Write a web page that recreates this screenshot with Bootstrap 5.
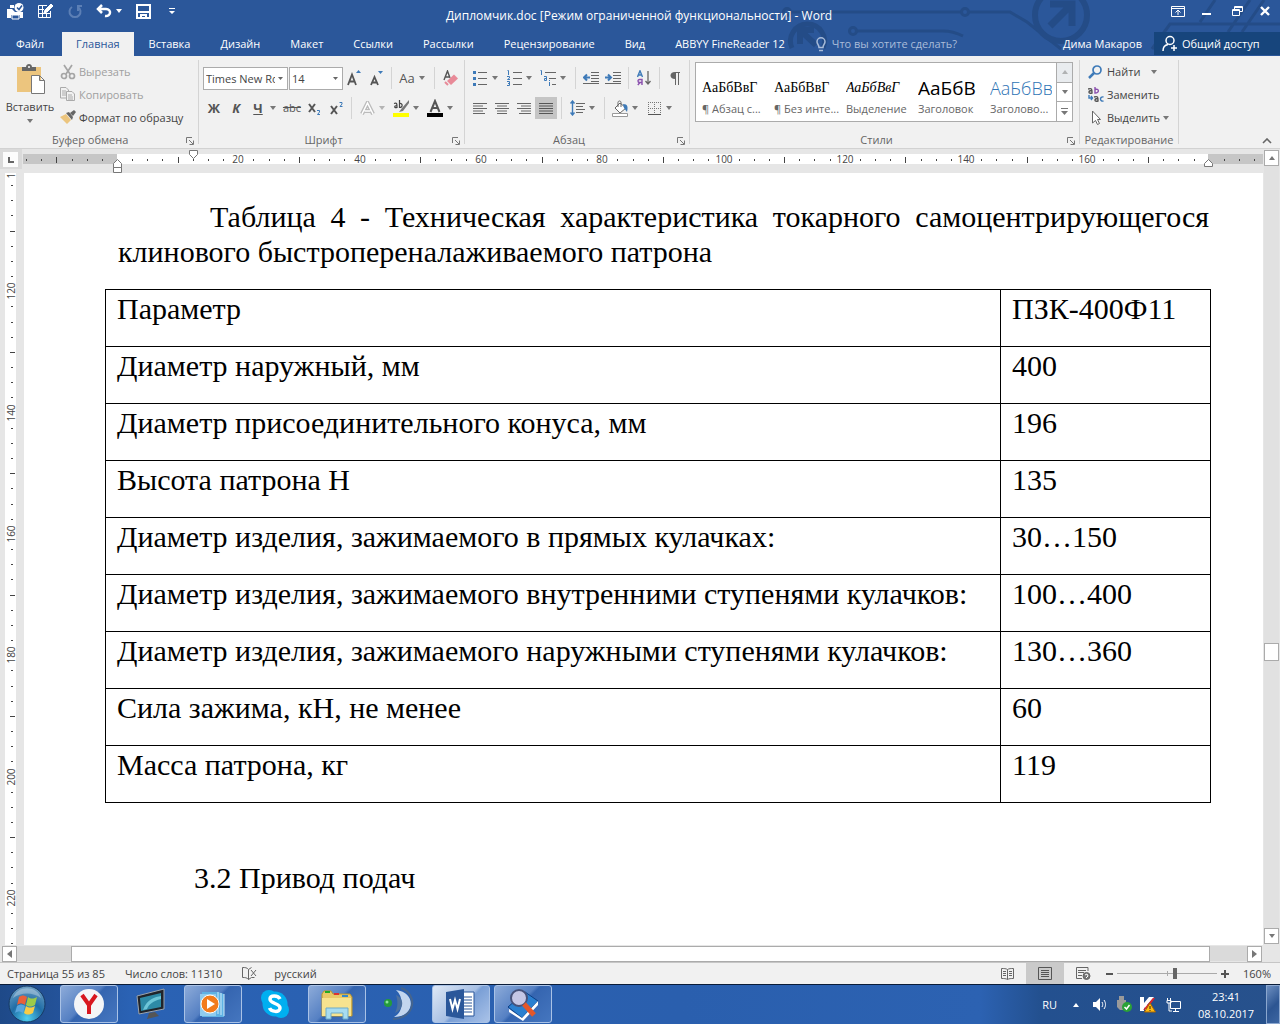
<!DOCTYPE html>
<html lang="ru">
<head>
<meta charset="utf-8">
<meta name="viewport" content="width=device-width, initial-scale=1">
<title>Дипломчик.doc - Word</title>
<link href="https://cdn.jsdelivr.net/npm/bootstrap@5.3.0/dist/css/bootstrap.min.css" rel="stylesheet">
<style>
:root{--blue:#2b579a;--ink:#444;--acc:#3e7ab8;}
body{font:11px/16px "Open Sans","Noto Sans",sans-serif;color:var(--ink);background:#e6e6e6;}
svg{display:block;flex:none}
button{font:inherit;color:inherit;border:0;background:none;padding:0}
a{color:inherit;text-decoration:none}
.tri{width:0;height:0;border:3px solid transparent;border-top:4px solid #777;border-bottom:0;flex:none}
.tri-up{border-top:0;border-bottom:4px solid #777}
/* title and tabs */
.top-band{background:var(--blue);color:#fff}
.circuit{position:absolute;right:0;top:0;width:500px;height:56px}
.title-row{height:32px}
.title-text{font-size:12px}
.qat{gap:14px;padding:2px 0 0 7px;height:20px}
.win{gap:13px;padding:2px 9px 0 0;height:20px}
.tabs-row{height:24px}
.rtab{padding:0 15px;height:24px;line-height:24px}
.rtab-first{width:60px;text-align:center;padding:0}
.rtab.current{background:#f1f1f1;color:var(--blue);padding:0 14px;margin-left:2px}
.ask{background:none;border:0;color:#fff;width:140px;padding:0;outline:0}
.ask::placeholder{color:#a9bcd9;opacity:1}
.share{background:#17457c;width:126px;height:23px}
/* ribbon */
.ribbon{background:#f1f1f1;height:93px;border-bottom:1px solid #d2d2d2}
.grp{border-right:1px solid #d4d4d4;margin:4px 0;height:84px}
.grp-foot{height:16px;line-height:16px;color:#666;position:relative;margin:0 0 -4px}
.grp-foot svg{position:absolute;right:4px;top:5px}
.g-clip{width:199px}.g-font{width:266px}.g-para{width:225px}.g-style{width:390px}.g-edit{width:99px}
.ib{width:22px;height:22px;display:flex;align-items:center;justify-content:center;flex:none;color:#555;font-size:13px;line-height:22px}
.dd{width:8px;height:22px;margin-right:4px;display:flex;align-items:center;justify-content:center;flex:none}
.vs{width:1px;height:22px;background:#d4d4d4;margin:0 4px;flex:none}
.rrow{height:22px}
.rstack{gap:8px;padding:7px 0 0 4px}
.ib.on{background:#c5c5c5}
.cb{appearance:none;border:1px solid #ababab;border-radius:0;height:23px;padding:0 12px 0 2px;font:11px "Open Sans",sans-serif;color:#444;background:#fff url("data:image/svg+xml,%3Csvg xmlns='http://www.w3.org/2000/svg' width='5' height='3'%3E%3Cpath d='M0 0h5L2.500 3z' fill='%23666'/%3E%3C/svg%3E") no-repeat right 4px center}
.cb-name{width:85px}.cb-size{width:54px;margin-left:1px}
.cmd{height:23px;gap:3px;white-space:nowrap}
.off{color:#a0a0a0}
.gallery{border:1px solid #ababab;background:#fff;height:60px;margin:2px 6px 0 5px}
.sty{width:72px;height:58px;padding:8px 4px 0 6px;overflow:hidden;color:#666;text-align:left}
.smp{height:26px;line-height:26px;color:#000;overflow:hidden;white-space:nowrap}
.smp-serif{font-family:"Liberation Serif",serif;font-size:14px}
.smp-head{font-size:19px;font-weight:500}.smp-light{font-size:18px;font-weight:300;color:#2e74b5}
.gal-side{width:16px;border-left:1px solid #ababab}
.gal-side button{flex:1;display:flex;align-items:center;justify-content:center;width:100%}
.gal-side button+button{border-top:1px solid #ababab}
/* workspace */
.hruler{height:24px}
.tabsel{width:22px;height:20px;background:#dadada;padding:3px 3px 2px 3px}
.tabsel div{width:15px;height:15px;background:#fcfcfc}
.vruler{width:24px}
.ruler-svg text{font:10px "Open Sans",sans-serif;fill:#444}
.paper{background:#fff;padding:26px 52px 0 81px;font:30px/35px "Liberation Serif",serif;color:#000}
.cap-par{text-indent:92px;text-align:justify;margin:0 2px 20px 13px}
.spec{width:100%;border-collapse:collapse;table-layout:fixed}
.spec td,.spec th{border:1px solid #000;height:57px;padding:1px 0 0 11px;vertical-align:top;font-weight:400}
.spec col:last-child{width:210px}
.sub-par{margin:57px 0 0 89px}
.vscroll{width:17px;padding:1px 1px 1px 1px}
.sbtn{width:15px;height:16px;background:#fff;border:1px solid #ababab;display:flex;align-items:center;justify-content:center;flex:none}
.vtrack{background:#e1e1e1}
.vthumb{width:15px;height:18px;background:#fff;border:1px solid #ababab}
.hscroll{height:18px;padding:1px 18px 1px 2px;border-bottom:1px solid #c6c6c6}
.htrack{background:#dadada;padding:0 37px 0 54px}
.hthumb{height:16px;background:#fff;border:1px solid #ababab}
.status{height:21px;background:#f1f1f1;padding:0 9px 0 7px}
.vw{width:38px;height:21px;display:flex;align-items:center;justify-content:center}
.vw.on{background:#cacaca}
.zoomer{appearance:none;width:100px;height:15px;background:linear-gradient(#aaa,#aaa) center/100% 1px no-repeat,linear-gradient(#aaa,#aaa) 50px center/1px 5px no-repeat;margin:0 4px}
.zoomer::-webkit-slider-thumb{appearance:none;width:4px;height:11px;background:#666}
/* taskbar */
.task{height:40px;border-top:1px solid #0a1c38;background:linear-gradient(90deg,#1e4988 0,#24539a 60px,#2a62b4 130px,#2a5fae 680px,#2c62b2 980px,#23508f 1040px,#27518c 1280px);color:#fff}
.tb{width:58px;height:38px;display:flex;align-items:center;justify-content:center;flex:none}
.tb.open{border:1px solid #a9c2e6;border-radius:3px;background:linear-gradient(135deg,#8dabd9,#5580c3 45%,#3565b0 50%,#4576bf)}
.tb.act{background:linear-gradient(135deg,#dfe8f5,#a8c0e4 50%,#7a9fd6 55%,#a9c2e8)}
.deskbtn{width:14px;height:39px;border:1px solid #8ba7cf;background:linear-gradient(135deg,#6d8fc0,#2c5592 55%,#3d66a2)}
.clock{width:76px;line-height:17px;text-align:center}
</style>
<script src="https://cdn.jsdelivr.net/npm/bootstrap@5.3.0/dist/js/bootstrap.bundle.min.js"></script>
</head>
<body class="d-flex flex-column min-vh-100">
<svg width="0" height="0" class="position-absolute"><defs>
<symbol id="launch" viewBox="0 0 8 8"><path d="M.5 6V.5H6M3 3l4 4M7.500 3.500v4h-4" fill="none" stroke="#777"/></symbol>
</defs></svg>
<header class="top-band position-relative">
  <svg class="circuit" viewBox="0 0 500 56" fill="none" stroke="#244c87" stroke-width="3">
    <path d="M12 12h169M189 12h41l17 10 34 27M77 31h86c8 0 12 1 20 5"/>
    <circle cx="7" cy="12" r="3.500"/><circle cx="185" cy="12" r="3.500"/><circle cx="73" cy="31" r="3.500"/>
    <path d="M12 48a17 17 0 1 1 31 0" stroke-width="5"/><path d="M36 45L22 32M20 44V30h14" stroke-width="6"/>
    <circle cx="281" cy="15" r="26" stroke-width="6"/><path d="M270 26l20-20M270 4h22v22" stroke-width="7"/>
    <path d="M372 49l18-25h110M420 22l15-22M448 32L470 0M462 32L484 0"/>
  </svg>
  <div class="title-row d-flex position-relative">
    <div class="qat d-flex align-items-center" style="flex:1 1 0">
      <svg width="17" height="17" viewBox="0 0 17 17" fill="#fff"><path d="M0 6h5l3 3h8v6h-3v-3H4v3H0zM3 2h4v3H3z"/><path d="M5 12h7v4H5z" fill="none" stroke="#fff"/><circle cx="12" cy="4.500" r="4.500"/><path d="M10 4.500l2 2 3-4" stroke="#2b579a" fill="none" stroke-width="1.500"/></svg>
      <svg width="16" height="16" viewBox="0 0 16 16" fill="none" stroke="#fff"><path d="M9 2.500H.5v12h12V8M.5 6.500H6M.5 10.500h12M4.500 2.500v12M8.500 10v4.500"/><path d="M6 10l1-3 6-6 2 2-6 6z" fill="#fff"/></svg>
      <svg width="14" height="15" viewBox="0 0 14 15" fill="none" stroke="#5c7fb5" stroke-width="2"><path d="M4 3a5.500 5.500 0 1 0 6 0M10 7V2h4"/></svg>
      <svg width="16" height="14" viewBox="0 0 16 14" fill="none" stroke="#fff" stroke-width="2.500"><path d="M6 1L2 5l4 4M2 5h8c6 0 5 8-1 7"/></svg>
      <span class="tri border-bottom-0" style="border-top-color:#fff;margin-left:-10px"></span>
      <svg width="15" height="15" viewBox="0 0 15 15"><path d="M1 1h13v13H1zM1 8h13M5 14v-3h5v3" fill="none" stroke="#fff" stroke-width="2"/></svg>
      <svg class="ms-1" width="6" height="7" viewBox="0 0 6 7" fill="#fff"><path d="M0 0h6v1H0zM0 3h6L3 6z"/></svg>
    </div>
    <div class="title-text align-self-center">Дипломчик.doc [Режим ограниченной функциональности] - Word</div>
    <div class="win d-flex align-items-center justify-content-end" style="flex:1 1 0">
      <button aria-label="Параметры ленты"><svg width="14" height="11" viewBox="0 0 14 11" fill="none" stroke="#fff"><path d="M.5.5h13v10H.5zM.5 2.500h13M7 9V4.500M4.500 6.500L7 4l2.500 2.500"/></svg></button>
      <button aria-label="Свернуть" class="px-1"><svg width="9" height="8"><path d="M0 6h9v2H0z" fill="#fff"/></svg></button>
      <button aria-label="Восстановить" class="px-1"><svg width="11" height="10" viewBox="0 0 11 10" fill="none" stroke="#fff"><path d="M2.500 3V.5h8v5H8M.5 3.500h7v6h-7zM.5 4.500h7M2.500 1.500h8"/></svg></button>
      <button aria-label="Закрыть"><svg width="11" height="10"><path d="M1 1l8 8M9 1L1 9" stroke="#fff" stroke-width="2.400"/></svg></button>
    </div>
  </div>
  <nav class="tabs-row d-flex position-relative">
    <a href="#" class="rtab rtab-first">Файл</a><a href="#" class="rtab current">Главная</a><a href="#" class="rtab">Вставка</a><a href="#" class="rtab">Дизайн</a><a href="#" class="rtab">Макет</a><a href="#" class="rtab">Ссылки</a><a href="#" class="rtab">Рассылки</a><a href="#" class="rtab">Рецензирование</a><a href="#" class="rtab">Вид</a><a href="#" class="rtab">ABBYY FineReader 12</a>
    <label class="d-flex align-items-center ms-3" style="gap:6px"><svg width="10" height="15" viewBox="0 0 10 15" fill="none" stroke="#a9bcd9" stroke-width="1.500"><path d="M3 10.500C3 8 1 7 1 4.800a4 4 0 0 1 8 0C9 7 7 8 7 10.500zM3 13.500h4"/></svg><input class="ask" placeholder="Что вы хотите сделать?" aria-label="Что вы хотите сделать?"></label>
    <a href="#" class="ms-auto me-2 pe-1 align-self-center">Дима Макаров</a>
    <button class="share d-flex align-items-center gap-1 ps-2"><svg width="16" height="17" viewBox="0 0 16 17" fill="none" stroke="#fff" stroke-width="1.500"><circle cx="8" cy="5.500" r="4"/><path d="M1 16c0-4 2-6 5-6.500M9 13h6M12 10v6"/></svg>Общий доступ</button>
  </nav>
</header>

<section class="ribbon d-flex">
  <div class="grp g-clip d-flex flex-column">
    <div class="d-flex flex-grow-1">
      <button class="d-flex flex-column align-items-center pt-1" style="width:60px">
        <svg width="29" height="31" viewBox="0 0 29 31"><path d="M1 3h24v25H1z" fill="#ecc57e"/><path d="M6 7V3h4c0-4 6-4 6 0h4v4z" fill="#666"/><circle cx="13" cy="3" r="1" fill="#fff"/><path d="M15.500 11.500h8l5 5v13h-13zM23.500 11.500v5h5" fill="#fff" stroke="#777"/></svg>
        <span class="mt-1">Вставить</span><span class="tri mt-1"></span></button>
      <div class="d-flex flex-column">
        <button class="cmd off d-flex align-items-center"><svg width="16" height="16" viewBox="0 0 16 16" fill="none" stroke="#a5a5a5" stroke-width="1.700"><path d="M4 1l6 9M12 1L6 10"/><circle cx="4" cy="12" r="2.500"/><circle cx="12" cy="12" r="2.500"/></svg>Вырезать</button>
        <button class="cmd off d-flex align-items-center"><svg width="16" height="15" viewBox="0 0 16 15" fill="#f1f1f1" stroke="#aaa"><path d="M.5.5H6L8.500 3v8h-8zM2 4h4M2 6h4M2 8h4"/><path d="M6.500 4.500H12L14.500 7v6.500h-8zM8 8h4M8 10h5M8 12h5"/></svg>Копировать</button>
        <button class="cmd d-flex align-items-center"><svg width="16" height="15" viewBox="0 0 16 15"><path d="M0 7l6-3 5 6-4 4z" fill="#ecc57e"/><path d="M6 3l3-1 4 5-1 3zM10 3l4-3 2 2-3 4z" fill="#666"/></svg>Формат по образцу</button>
      </div>
    </div>
    <div class="grp-foot ps-5"><span class="ps-1">Буфер обмена</span><svg width="8" height="8"><use href="#launch"/></svg></div>
  </div>
  <div class="grp g-font d-flex flex-column">
    <div class="rstack d-flex flex-column flex-grow-1">
      <div class="rrow d-flex align-items-center">
        <select class="cb cb-name" aria-label="Шрифт"><option>Times New Roman</option></select><select class="cb cb-size" aria-label="Размер"><option>14</option></select>
        <button class="ib" aria-label="Увеличить"><svg width="14" height="16" viewBox="0 0 14 16"><path d="M1 15L5 4.500 9 15M2.500 11.500h5" fill="none" stroke="#555" stroke-width="1.800"/><path d="M9 3l2.500-3L14 3z" fill="#3e7ab8"/></svg></button>
        <button class="ib" aria-label="Уменьшить"><svg width="13" height="16" viewBox="0 0 13 16"><path d="M1 15l3.500-8L8 15M2.300 12.500h4.500" fill="none" stroke="#555" stroke-width="1.800"/><path d="M8 1h5l-2.500 3z" fill="#3e7ab8"/></svg></button>
        <span class="vs"></span><button class="ib">Aa</button><span class="dd"><i class="tri"></i></span><span class="vs"></span>
        <button class="ib" aria-label="Очистить"><svg width="15" height="16" viewBox="0 0 15 16"><path d="M1 10l3.500-9L7 8M2 7h4" fill="none" stroke="#555" stroke-width="1.400"/><path d="M4 11l7-6.500 4 4L8 15z" fill="#e88a98"/><path d="M2 12l3 3" stroke="#e88a98" stroke-width="2"/></svg></button>
      </div>
      <div class="rrow d-flex align-items-center">
        <button class="ib fw-bold">Ж</button><button class="ib fw-bold fst-italic">К</button><button class="ib fw-bold text-decoration-underline">Ч</button><span class="dd"><i class="tri"></i></span>
        <button class="ib text-decoration-line-through" style="font-size:11px">abc</button><button class="ib" aria-label="Подстрочный"><svg width="13" height="13" viewBox="0 0 13 13" fill="none"><path d="M1 2l6 8M7 2l-6 8" stroke="#555" stroke-width="2"/><path d="M9 8.500h2.500V10L9.500 12.500H12" stroke="#3e7ab8"/></svg></button><button class="ib" aria-label="Надстрочный"><svg width="13" height="13" viewBox="0 0 13 13" fill="none"><path d="M1 4l6 8M7 4l-6 8" stroke="#555" stroke-width="2"/><path d="M9.500.5H12V2L10 4.500h2.500" stroke="#3e7ab8"/></svg></button>
        <span class="vs"></span>
        <button class="ib" aria-label="Эффекты"><svg width="15" height="15" viewBox="0 0 15 15" fill="none"><path d="M2 13L7.500 2 13 13M4.500 10h6" stroke="#bbb" stroke-width="4"/><path d="M2 13L7.500 2 13 13M4.500 10h6" stroke="#fff" stroke-width="1.500"/></svg></button><span class="dd opacity-50"><i class="tri"></i></span>
        <button class="ib" aria-label="Выделение"><svg width="17" height="18" viewBox="0 0 17 18"><path d="M0 14h16v4H0z" fill="#ff0"/><path d="M16 1L9 9l-3 4 4-1 6-8z" fill="#777"/><path d="M1 4.500c3-1 3 0 3 4C1 9.500 1 6.500 4 6.500M6.500 1v7.500c4 0 3-5 0-4" fill="none" stroke="#444" stroke-width="1.200"/></svg></button><span class="dd"><i class="tri"></i></span>
        <button class="ib" aria-label="Цвет"><svg width="17" height="18" viewBox="0 0 17 18"><path d="M0 14h16v4H0z"/><path d="M3.500 13L8 2l4.500 11M5 9h6" fill="none" stroke="#555" stroke-width="2"/></svg></button><span class="dd"><i class="tri"></i></span>
      </div>
    </div>
    <div class="grp-foot text-center pe-3">Шрифт<svg width="8" height="8"><use href="#launch"/></svg></div>
  </div>
  <div class="grp g-para d-flex flex-column">
    <div class="rstack d-flex flex-column flex-grow-1">
      <div class="rrow d-flex align-items-center">
        <button class="ib" aria-label="Маркеры"><svg width="14" height="16"><path d="M5 2.500h9M5 8.500h9M5 14.500h9" stroke="#666"/><path d="M0 1h3v3H0zM0 7h3v3H0zM0 13h3v3H0z" fill="#3e7ab8"/></svg></button><span class="dd"><i class="tri"></i></span>
        <button class="ib" aria-label="Нумерация"><svg width="15" height="16" fill="none"><path d="M6 2.500h9M6 8.500h9M6 14.500h9" stroke="#666"/><path d="M.5.5h1V5M0 6.500h2.500V8L.5 9.500H3M0 11.500h2.500v4H0M1 13.500h1" stroke="#3e7ab8"/></svg></button><span class="dd"><i class="tri"></i></span>
        <button class="ib" aria-label="Многоуровневый список"><svg width="16" height="16" fill="none"><path d="M5 2.500h11M9 8.500h7M12 14.500h4" stroke="#666"/><path d="M.5.5h1V5M4 6.500h2.500v4H4.500v-2h2M9.500 10v1M9.500 12v4" stroke="#3e7ab8"/></svg></button><span class="dd"><i class="tri"></i></span>
        <span class="vs"></span>
        <button class="ib" aria-label="Уменьшить отступ"><svg width="16" height="12" fill="none"><path d="M8 .5h8M8 3.500h8M8 6.500h8M8 9.500h8M0 11.500h16" stroke="#666"/><path d="M7 5.500H1M4 2.500l-3 3 3 3" stroke="#3e7ab8" stroke-width="2"/></svg></button><button class="ib" aria-label="Увеличить отступ"><svg width="16" height="12" fill="none"><path d="M8 .5h8M8 3.500h8M8 6.500h8M8 9.500h8M0 11.500h16" stroke="#666"/><path d="M0 5.500h6M3 2.500l3 3-3 3" stroke="#3e7ab8" stroke-width="2"/></svg></button>
        <span class="vs"></span>
        <button class="ib" aria-label="Сортировка"><svg width="14" height="16" viewBox="0 0 14 16" fill="none"><path d="M.5 7L3 .8 5.500 7M1.500 5h3" stroke="#3e7ab8" stroke-width="1.400"/><path d="M5 15V9.500H2.500c-2 0-2 3 0 3H5M3 12.500L.8 15" stroke="#8a4fae" stroke-width="1.400"/><path d="M11 1v13M8.500 11l2.500 3 2.500-3" stroke="#666" stroke-width="1.300"/></svg></button>
        <span class="vs"></span>
        <button class="ib" aria-label="Знаки"><svg width="10" height="13"><path d="M5 0h5v1H9v12H8V1H6v12H5V7C-1 7-1 0 5 0z" fill="#666"/></svg></button>
      </div>
      <div class="rrow d-flex align-items-center">
        <button class="ib" aria-label="По левому краю"><svg width="14" height="11"><path d="M0 .5h14M0 3h10M0 5.500h14M0 8h10M0 10.500h12" stroke="#666"/></svg></button><button class="ib" aria-label="По центру"><svg width="14" height="11"><path d="M0 .5h14M2 3h10M0 5.500h14M2 8h10M2 10.500h10" stroke="#666"/></svg></button><button class="ib" aria-label="По правому краю"><svg width="14" height="11"><path d="M0 .5h14M4 3h10M0 5.500h14M4 8h10M2 10.500h12" stroke="#666"/></svg></button><button class="ib on" aria-label="По ширине"><svg width="14" height="11"><path d="M0 .5h14M0 3h14M0 5.500h14M0 8h14M0 10.500h14" stroke="#555"/></svg></button>
        <span class="vs"></span>
        <button class="ib" aria-label="Интервал"><svg width="15" height="16" fill="none"><path d="M6 3.500h9M6 6.500h7M6 9.500h9M6 12.500h7" stroke="#666"/><path d="M2.500 1v14M.5 3.500l2-2.500 2 2.500M.5 12.500l2 2.500 2-2.500" stroke="#3e7ab8" stroke-width="1.400"/></svg></button><span class="dd"><i class="tri"></i></span>
        <span class="vs"></span>
        <button class="ib" aria-label="Заливка"><svg width="17" height="17"><path d="M8 3l6 5-6 5-5-5zM6 7V2.500c0-2 3-2 3 0V7" fill="#fff" stroke="#666"/><path d="M11 4c5 0 5 3 4 8l-3-4z" fill="#3e7ab8"/><path d="M.5 13.500h15v3H.5z" fill="#fff" stroke="#999"/></svg></button><span class="dd"><i class="tri"></i></span>
        <button class="ib" aria-label="Границы"><svg width="13" height="13" fill="none"><path d="M.5 0v12M6.500 0v12M12.500 0v12M0 .5h13M0 6.500h13" stroke="#777" stroke-dasharray="1 1"/><path d="M0 12.500h13" stroke="#555"/></svg></button><span class="dd"><i class="tri"></i></span>
      </div>
    </div>
    <div class="grp-foot text-center pe-3">Абзац<svg width="8" height="8"><use href="#launch"/></svg></div>
  </div>
  <div class="grp g-style d-flex flex-column">
    <div class="flex-grow-1">
      <div class="gallery d-flex">
        <button class="sty"><div class="smp smp-serif">АаБбВвГ</div><div class="text-nowrap">¶ Абзац с...</div></button>
        <button class="sty"><div class="smp smp-serif">АаБбВвГ</div><div class="text-nowrap">¶ Без инте...</div></button>
        <button class="sty"><div class="smp smp-serif fst-italic">АаБбВвГ</div><div class="text-nowrap">Выделение</div></button>
        <button class="sty"><div class="smp smp-head">АаБбВ</div><div class="text-nowrap">Заголовок</div></button>
        <button class="sty"><div class="smp smp-light">АаБбВв</div><div class="text-nowrap">Заголово...</div></button>
        <div class="gal-side d-flex flex-column ms-auto">
          <button class="bg-body-secondary" aria-label="Вверх"><i class="tri tri-up opacity-50"></i></button><button aria-label="Вниз"><i class="tri"></i></button><button aria-label="Ещё"><svg width="7" height="7"><path d="M0 0h7v1H0zM0 3h7L3.500 7z" fill="#777"/></svg></button>
        </div>
      </div>
    </div>
    <div class="grp-foot text-center pe-3">Стили<svg width="8" height="8"><use href="#launch"/></svg></div>
  </div>
  <div class="grp g-edit d-flex flex-column">
    <div class="d-flex flex-column flex-grow-1 ps-2">
      <button class="cmd d-flex align-items-center"><svg width="16" height="14" viewBox="0 0 16 14" fill="none" stroke="#3e7ab8"><circle cx="9" cy="5" r="4" stroke-width="1.700"/><path d="M6 8l-5 5" stroke-width="2.500"/></svg>Найти<i class="tri ms-2"></i></button>
      <button class="cmd d-flex align-items-center"><svg width="16" height="15" viewBox="0 0 16 15" fill="none" stroke-width="1.400"><path d="M0 2c4-1 4 0 4 4C0 7 0 3.500 4 3.500M6 10c4-1 4 0 4 4-4 1-4-2.500 0-2.500" stroke="#555"/><path d="M7 0v6c5 0 4-5 0-3.500" stroke="#8a4fae"/><path d="M15.500 10c-4-1-4 5 0 4M1 8v3h3M3 9l1.500 2L3 13" stroke="#3e7ab8"/></svg>Заменить</button>
      <button class="cmd d-flex align-items-center"><svg width="16" height="16" viewBox="0 0 16 16"><path d="M4.500 1v12l3-2.500 2 4 2-1-2-4h3z" fill="#fff" stroke="#666"/></svg>Выделить<i class="tri"></i></button>
    </div>
    <div class="grp-foot text-center text-nowrap">Редактирование</div>
  </div>
  <button class="ms-auto align-self-end pe-1 me-1 pb-1" aria-label="Свернуть ленту"><svg width="10" height="6"><path d="M1 5l4-4 4 4" fill="none" stroke="#666" stroke-width="1.600"/></svg></button>
</section>

<main class="d-flex flex-grow-1">
  <div class="d-flex flex-column flex-grow-1">
    <div class="hruler d-flex">
      <div class="tabsel"><div><svg width="15" height="15"><path d="M6 5v5h5" fill="none" stroke="#666" stroke-width="2"/></svg></div></div>
      <svg id="hr" class="ruler-svg flex-grow-1" height="24" style="width:0"></svg>
    </div>
    <div class="d-flex flex-grow-1">
      <svg id="vr" class="ruler-svg vruler align-self-stretch" height="772"></svg>
      <article class="paper flex-grow-1">
        <p class="cap-par">Таблица 4 - Техническая характеристика токарного самоцентрирующегося клинового быстропереналаживаемого патрона</p>
        <table class="spec">
          <colgroup><col><col></colgroup>
          <tr><th>Параметр</th><th>ПЗК-400Ф11</th></tr>
          <tr><td>Диаметр наружный, мм</td><td>400</td></tr>
          <tr><td>Диаметр присоединительного конуса, мм</td><td>196</td></tr>
          <tr><td>Высота патрона Н</td><td>135</td></tr>
          <tr><td>Диаметр изделия, зажимаемого в прямых кулачках:</td><td>30…150</td></tr>
          <tr><td>Диаметр изделия, зажимаемого внутренними ступенями кулачков:</td><td>100…400</td></tr>
          <tr><td>Диаметр изделия, зажимаемого наружными ступенями кулачков:</td><td>130…360</td></tr>
          <tr><td>Сила зажима, кН, не менее</td><td>60</td></tr>
          <tr><td>Масса патрона, кг</td><td>119</td></tr>
        </table>
        <p class="sub-par">3.2 Привод подач</p>
      </article>
    </div>
  </div>
  <div class="vscroll d-flex flex-column">
    <button class="sbtn" aria-label="Вверх"><i class="tri tri-up"></i></button>
    <div class="vtrack d-flex flex-column flex-grow-1"><div style="flex:478 1 0"></div><div class="vthumb"></div><div style="flex:267 1 0"></div></div>
    <button class="sbtn" aria-label="Вниз"><i class="tri"></i></button>
  </div>
</main>
<div class="hscroll d-flex">
  <button class="sbtn" aria-label="Влево"><svg width="5" height="8"><path d="M5 0v8L0 4z" fill="#777"/></svg></button>
  <div class="htrack flex-grow-1"><div class="hthumb"></div></div>
  <button class="sbtn" aria-label="Вправо"><svg width="5" height="8"><path d="M0 0v8l5-4z" fill="#777"/></svg></button>
</div>
<footer class="status d-flex align-items-center">
  <span>Страница 55 из 85</span><span style="margin:0 20px">Число слов: 11310</span>
  <svg width="15" height="13" fill="none" stroke="#666"><path d="M6.500 2.500C5 .5 3 .5.5.5v10c2.500 0 4.500 0 6 2zM6.500 2.500l3-2M6.500 12.500l3-2h3M9 3l5 6M14 3L9 9"/></svg><span style="margin-left:17px">русский</span>
  <div class="d-flex align-items-center ms-auto">
    <button class="vw" aria-label="Чтение"><svg width="13" height="12" fill="none" stroke="#666"><path d="M6.500 1.500C5 .5 3 .5.5.5v10c2.500 0 4.500 0 6 1 1.500-1 3.500-1 6-1V.5c-2.500 0-4.500 0-6 1v10M2 3.500h3M2 5.500h3M2 7.500h3M8 3.500h3M8 5.500h3M8 7.500h3"/></svg></button>
    <button class="vw on" aria-label="Разметка"><svg width="14" height="13" fill="none" stroke="#555"><path d="M.5.5h13v12H.5zM3 3.500h8M3 5.500h8M3 7.500h8M3 9.500h8"/></svg></button>
    <button class="vw" aria-label="Веб"><svg width="15" height="13" fill="none" stroke="#666"><path d="M12 4V.5H.5v11H6M2 3.500h8M2 5.500h6M2 8.500h4"/><circle cx="10.500" cy="9" r="3.500" fill="#777"/><path d="M9 8l2-1 1 2-2 2" stroke="#fff"/></svg></button>
    <button class="ms-1" aria-label="Меньше"><svg width="7" height="8"><path d="M0 3h7v2H0z" fill="#555"/></svg></button>
    <input type="range" class="zoomer" min="0" max="100" value="58" aria-label="Масштаб">
    <button aria-label="Больше"><svg width="8" height="8"><path d="M0 3h3V0h2v3h3v2H5v3H3V5H0z" fill="#555"/></svg></button>
    <span style="margin-left:14px">160%</span>
  </div>
</footer>
<nav class="task d-flex">
  <button class="tb me-1" style="width:56px" aria-label="Пуск"><svg width="40" height="38" viewBox="0 0 40 38"><defs><radialGradient id="orb" cx=".5" cy=".9" r=".9"><stop offset="0" stop-color="#4fd0f0"/><stop offset=".5" stop-color="#1f6da6"/><stop offset="1" stop-color="#6f9fc4"/></radialGradient></defs><circle cx="19" cy="19" r="18" fill="url(#orb)" stroke="#173a63"/><path d="M11 12c3-2 5-2 8 0l-2 8c-3-2-5-2-8 0z" fill="#e8603a"/><path d="M20 12c3 2 5 2 9 0l-2 8c-4 2-6 2-9 0z" fill="#9ccb4a"/><path d="M9 21c3-2 5-2 8 0l-2 7c-3-2-5-2-8 0z" fill="#58a5dd"/><path d="M18 21c3 2 5 2 9 0l-2 7c-4 2-6 2-9 0z" fill="#f8cc46"/><path d="M5 13C9 0 29 0 33 13 25 7 13 7 5 13z" fill="#fff" opacity=".3"/></svg></button>
  <div class="d-flex gap-1">
    <button class="tb open" aria-label="Яндекс"><svg width="32" height="32"><circle cx="16" cy="16" r="15" fill="#f4f5f7"/><path d="M9 7l7 10v9M23 7l-7 10" fill="none" stroke="#d8171f" stroke-width="4"/></svg></button>
    <button class="tb" aria-label="ТВ"><svg width="32" height="34" viewBox="0 0 32 34"><path d="M2 9L29 2v20L4 27z" fill="#20242a" stroke="#9aa3ad"/><path d="M5 11l21-5v14L6 24z" fill="#2d8aa6"/><path d="M8 23C12 12 20 10 26 9v3c-8 2-12 5-14 10z" fill="#6dc6d8"/><path d="M14 26l6-1 4 4-12 3z" fill="#555"/></svg></button>
    <button class="tb open" aria-label="Проигрыватель"><svg width="30" height="30"><path d="M4 3h16l6 2v23H4z" fill="#5fb2e4"/><path d="M20 3v22M23 4v22M26 5v22" stroke="#cfeaf8"/><path d="M2 5h16v22H2z" fill="#8fcbee"/><circle cx="12" cy="15" r="9" fill="#f27b1c" stroke="#fff" stroke-width="1"/><path d="M9 10v10l8-5z" fill="#fff"/></svg></button>
    <button class="tb" aria-label="Skype"><svg width="32" height="32"><circle cx="16" cy="16" r="12.500" fill="#00aff0"/><circle cx="10" cy="10" r="8" fill="#00aff0"/><circle cx="22" cy="22" r="8" fill="#00aff0"/><path d="M21 11c-2-4-10-4-10 0 0 5 10 4 10 9 0 5-9 4-10.500 0" fill="none" stroke="#fff" stroke-width="3.500"/></svg></button>
    <button class="tb open" aria-label="Проводник"><svg width="34" height="32"><path d="M2 6l2-3h7l2 3h17l2 3v19H2z" fill="#e9c968" stroke="#b9952f"/><path d="M5 3h5v2H5z" fill="#2a2"/><path d="M14 5h5v2h-5z" fill="#d33"/><path d="M22 7h6v2h-6z" fill="#38c"/><path d="M2 10h29v18H2z" fill="#f7e38f"/><path d="M6 31V20h22v11h-5v-6H11v6z" fill="#a7dcf0" stroke="#6cabc9"/></svg></button>
    <button class="tb" aria-label="TeamSpeak"><svg width="32" height="34"><path d="M13 3c22 3 18 28-2 27 10-5 10-20 2-27z" fill="#c3d6ee"/><path d="M13 8c9 4 8 14-1 18 3-6 3-12 1-18z" fill="#4d719f"/><path d="M18 1c17 6 15 30-8 31" fill="none" stroke="#46658d" stroke-width="2"/><circle cx="5" cy="16" r="4" fill="#249b3c"/><circle cx="4" cy="15" r="1.500" fill="#8be39a"/></svg></button>
    <button class="tb open act" aria-label="Word"><svg width="32" height="32"><path d="M16 4h13v24H16z" fill="#fff" stroke="#2b579a"/><path d="M19 9h8M19 12h8M19 15h8M19 18h8M19 21h8M19 24h8" stroke="#2b579a"/><path d="M1 4l18-3v30L1 28z" fill="#2b579a"/><path d="M5 11l2.500 10L10 12l2.500 9L15 11" fill="none" stroke="#fff" stroke-width="2"/></svg></button>
    <button class="tb open" aria-label="Поиск"><svg width="34" height="34"><path d="M2 20L19 5l13 9-16 17z" fill="#2b80d0" stroke="#0d3f86"/><path d="M3 22l13 9 16-17v4L17 34 3 25z" fill="#fff"/><circle cx="13" cy="11" r="8" fill="#c5c7e6" stroke="#47527a" stroke-width="2"/><path d="M18 17l10 11" stroke="#e4572a" stroke-width="5"/></svg></button>
  </div>
  <div class="d-flex align-items-center ms-auto">
    <span style="margin-right:16px">RU</span><i class="tri tri-up" style="border-bottom-color:#fff"></i>
    <svg style="margin-left:14px" width="14" height="16" fill="none" stroke="#fff"><path d="M0 5h3l4-4v13l-4-4H0z" fill="#fff" stroke="none"/><path d="M9 5c1 2 1 3 0 5M11 3c2 3 2 6 0 9"/></svg>
    <svg style="margin-left:9px" width="16" height="17"><path d="M3 0h5v4h2v7l-3 3H4l-3-3V4h2z" fill="#9a9a9a"/><circle cx="11" cy="11" r="5" fill="#2aa137"/><path d="M8.500 11l2 2 3-4" stroke="#fff" fill="none" stroke-width="1.500"/></svg>
    <svg style="margin-left:8px" width="16" height="16"><path d="M0 0h4v6l5-6h5L7 8l4 6H6L4 10v4H0z" fill="#fff"/><path d="M3 13L13 1h2L7 12z" fill="#e1232b"/><path d="M10 6l5.500 9h-11z" fill="#fb1" stroke="#a60"/><path d="M10 9v3M10 13v1" stroke="#222"/></svg>
    <svg style="margin-left:10px" width="16" height="16" fill="none" stroke="#fff"><path d="M4.500 4.500h10v7h-10zM7 14.500h6M9.500 12v2M1 3.500h4V6H1zM1.500 1v2M4.500 1v2M3 6v8h3"/></svg>
    <div class="clock" style="margin:0 2px 0 6px">23:41<br>08.10.2017</div>
    <button class="deskbtn" aria-label="Показать рабочий стол"></button>
  </div>
</nav>
<script>
// Ruler scale: one step is 2.5 mm, eight steps between numbers.
const NS='http://www.w3.org/2000/svg',STEP=121.3/8;
function add(svg,name,attrs,text){const e=document.createElementNS(NS,name);for(const k in attrs)e.setAttribute(k,attrs[k]);if(text)e.textContent=text;svg.append(e)}
const hr=document.getElementById('hr'),vr=document.getElementById('vr');
const W=hr.clientWidth,left=95,right=W-55;
add(hr,'rect',{x:1,y:5,width:W-1,height:10,fill:'#c6c6c6'});
add(hr,'rect',{x:left,y:5,width:right-left,height:10,fill:'#fff'});
for(let i=-6;;i++){
  const x=left+i*STEP;if(x>W-4)break;
  if(i%8===0){if(i>0&&x<right-2)add(hr,'text',{x:Math.round(x),y:14,'text-anchor':'middle'},String(i/8*20))}
  else{const t=i%4===0;add(hr,'rect',{x:Math.round(x),y:t?8:10,width:1,height:t?6:2,fill:'#444'})}
}
const mark={fill:'#fff',stroke:'#777'};
add(hr,'path',{d:'M167.500 1.500h8v4l-4 4-4-4z',...mark});
add(hr,'path',{d:`M${left-3.5} 18.500v-4l4-4 4 4v4zM${left-3.5} 18.500h8v5h-8z`,...mark});
add(hr,'path',{d:`M${right-3.5} 17.500v-3l4-4 4 4v3z`,...mark});
const H=vr.clientHeight;
add(vr,'rect',{x:5,y:0,width:11,height:H,fill:'#fff'});
for(let i=0;;i++){
  const y=-3+i*STEP;if(y>H)break;
  if(i%8===0){const c=Math.round(y);add(vr,'text',{x:15,y:c,'text-anchor':'middle',transform:`rotate(-90 15 ${c})`},String(100+i/8*20))}
  else{const t=i%4===0;add(vr,'rect',{x:t?10:11,y:Math.round(y),width:t?5:2,height:1,fill:'#444'})}
}
</script>
</body>
</html>
